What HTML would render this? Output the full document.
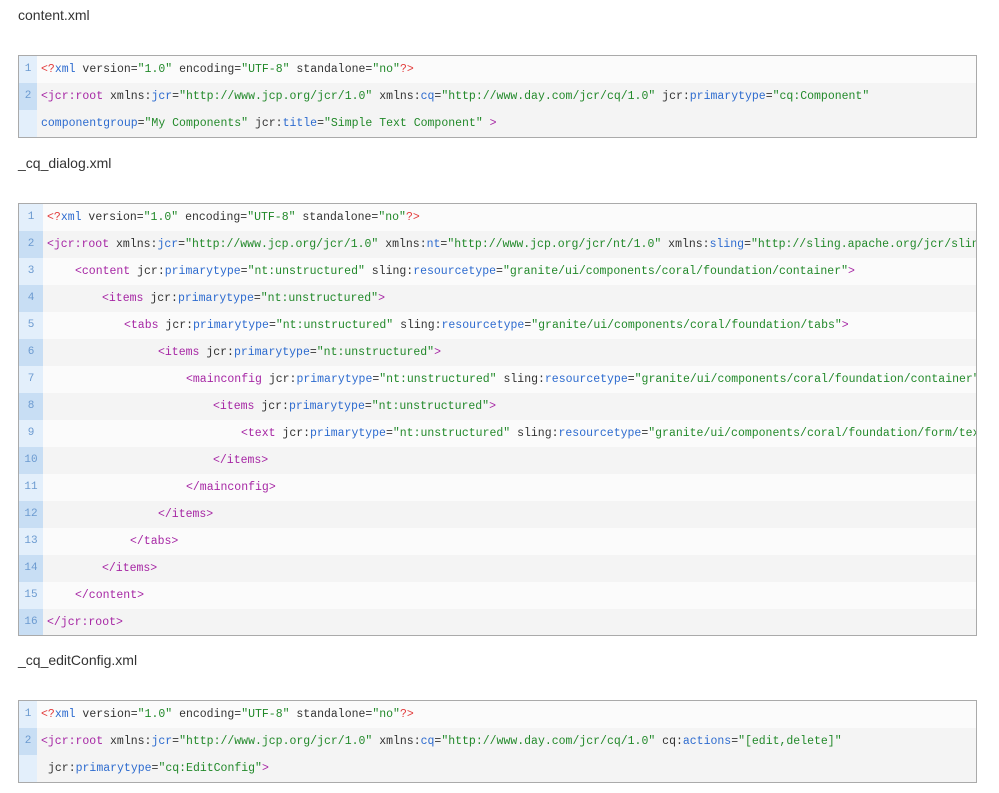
<!DOCTYPE html>
<html><head><meta charset="utf-8"><style>
body{margin:0;background:#fff;width:999px;height:793px;overflow:hidden;font-family:"Liberation Sans",sans-serif;}
.h{position:absolute;left:18px;font-size:14px;color:#333;}
.box{position:absolute;left:18px;width:957px;border:1px solid #aaa;overflow:hidden;background:#fbfbfb;}
.r{height:27px;line-height:27px;white-space:pre;font-family:"Liberation Mono",monospace;font-size:11.5px;color:#333;position:relative;}
.r.e{background:#f4f4f4;}
.g{position:absolute;left:0;top:0;bottom:0;background:#e3effb;color:#6b9ad0;text-align:center;font-size:11px;}
.e .g{background:#c8def4;}
.c{position:absolute;top:0;}
.t{color:#a626a4}.a{color:#2d6bcf}.v{color:#22892a}.p{color:#e23c3c}
</style></head><body>
<div class="h" style="top:7px">content.xml</div>
<div class="box" style="top:55px;height:81px">
<div class="r"><div class="g" style="width:18px">1</div><div class="c" style="left:22px"><span class="p">&lt;?</span><span class="a">xml</span> version=<span class="v">"1.0"</span> encoding=<span class="v">"UTF-8"</span> standalone=<span class="v">"no"</span><span class="p">?&gt;</span></div></div>
<div class="r e"><div class="g" style="width:18px">2</div><div class="c" style="left:22px"><span class="t">&lt;jcr:root</span> xmlns:<span class="a">jcr</span>=<span class="v">"http://www.jcp.org/jcr/1.0"</span> xmlns:<span class="a">cq</span>=<span class="v">"http://www.day.com/jcr/cq/1.0"</span> jcr:<span class="a">primarytype</span>=<span class="v">"cq:Component"</span></div></div>
<div class="r e"><div class="g" style="width:18px;background:#e3effb"></div><div class="c" style="left:22px"><span class="a">componentgroup</span>=<span class="v">"My Components"</span> jcr:<span class="a">title</span>=<span class="v">"Simple Text Component"</span> <span class="t">&gt;</span></div></div>
</div>
<div class="h" style="top:155px">_cq_dialog.xml</div>
<div class="box" style="top:203px;height:431px">
<div class="r"><div class="g" style="width:24px">1</div><div class="c" style="left:28px"><span class="p">&lt;?</span><span class="a">xml</span> version=<span class="v">"1.0"</span> encoding=<span class="v">"UTF-8"</span> standalone=<span class="v">"no"</span><span class="p">?&gt;</span></div></div>
<div class="r e"><div class="g" style="width:24px">2</div><div class="c" style="left:28px"><span class="t">&lt;jcr:root</span> xmlns:<span class="a">jcr</span>=<span class="v">"http://www.jcp.org/jcr/1.0"</span> xmlns:<span class="a">nt</span>=<span class="v">"http://www.jcp.org/jcr/nt/1.0"</span> xmlns:<span class="a">sling</span>=<span class="v">"http://sling.apache.org/jcr/sling/1.0"</span></div></div>
<div class="r"><div class="g" style="width:24px">3</div><div class="c" style="left:56px"><span class="t">&lt;content</span> jcr:<span class="a">primarytype</span>=<span class="v">"nt:unstructured"</span> sling:<span class="a">resourcetype</span>=<span class="v">"granite/ui/components/coral/foundation/container"</span><span class="t">&gt;</span></div></div>
<div class="r e"><div class="g" style="width:24px">4</div><div class="c" style="left:83px"><span class="t">&lt;items</span> jcr:<span class="a">primarytype</span>=<span class="v">"nt:unstructured"</span><span class="t">&gt;</span></div></div>
<div class="r"><div class="g" style="width:24px">5</div><div class="c" style="left:105px"><span class="t">&lt;tabs</span> jcr:<span class="a">primarytype</span>=<span class="v">"nt:unstructured"</span> sling:<span class="a">resourcetype</span>=<span class="v">"granite/ui/components/coral/foundation/tabs"</span><span class="t">&gt;</span></div></div>
<div class="r e"><div class="g" style="width:24px">6</div><div class="c" style="left:139px"><span class="t">&lt;items</span> jcr:<span class="a">primarytype</span>=<span class="v">"nt:unstructured"</span><span class="t">&gt;</span></div></div>
<div class="r"><div class="g" style="width:24px">7</div><div class="c" style="left:167px"><span class="t">&lt;mainconfig</span> jcr:<span class="a">primarytype</span>=<span class="v">"nt:unstructured"</span> sling:<span class="a">resourcetype</span>=<span class="v">"granite/ui/components/coral/foundation/container"</span><span class="t">&gt;</span></div></div>
<div class="r e"><div class="g" style="width:24px">8</div><div class="c" style="left:194px"><span class="t">&lt;items</span> jcr:<span class="a">primarytype</span>=<span class="v">"nt:unstructured"</span><span class="t">&gt;</span></div></div>
<div class="r"><div class="g" style="width:24px">9</div><div class="c" style="left:222px"><span class="t">&lt;text</span> jcr:<span class="a">primarytype</span>=<span class="v">"nt:unstructured"</span> sling:<span class="a">resourcetype</span>=<span class="v">"granite/ui/components/coral/foundation/form/textfield"</span></div></div>
<div class="r e"><div class="g" style="width:24px">10</div><div class="c" style="left:194px"><span class="t">&lt;/items&gt;</span></div></div>
<div class="r"><div class="g" style="width:24px">11</div><div class="c" style="left:167px"><span class="t">&lt;/mainconfig&gt;</span></div></div>
<div class="r e"><div class="g" style="width:24px">12</div><div class="c" style="left:139px"><span class="t">&lt;/items&gt;</span></div></div>
<div class="r"><div class="g" style="width:24px">13</div><div class="c" style="left:111px"><span class="t">&lt;/tabs&gt;</span></div></div>
<div class="r e"><div class="g" style="width:24px">14</div><div class="c" style="left:83px"><span class="t">&lt;/items&gt;</span></div></div>
<div class="r"><div class="g" style="width:24px">15</div><div class="c" style="left:56px"><span class="t">&lt;/content&gt;</span></div></div>
<div class="r e"><div class="g" style="width:24px">16</div><div class="c" style="left:28px"><span class="t">&lt;/jcr:root&gt;</span></div></div>
</div>
<div class="h" style="top:652px">_cq_editConfig.xml</div>
<div class="box" style="top:700px;height:81px">
<div class="r"><div class="g" style="width:18px">1</div><div class="c" style="left:22px"><span class="p">&lt;?</span><span class="a">xml</span> version=<span class="v">"1.0"</span> encoding=<span class="v">"UTF-8"</span> standalone=<span class="v">"no"</span><span class="p">?&gt;</span></div></div>
<div class="r e"><div class="g" style="width:18px">2</div><div class="c" style="left:22px"><span class="t">&lt;jcr:root</span> xmlns:<span class="a">jcr</span>=<span class="v">"http://www.jcp.org/jcr/1.0"</span> xmlns:<span class="a">cq</span>=<span class="v">"http://www.day.com/jcr/cq/1.0"</span> cq:<span class="a">actions</span>=<span class="v">"[edit,delete]"</span></div></div>
<div class="r e"><div class="g" style="width:18px;background:#e3effb"></div><div class="c" style="left:29px">jcr:<span class="a">primarytype</span>=<span class="v">"cq:EditConfig"</span><span class="t">&gt;</span></div></div>
</div>
</body></html>
